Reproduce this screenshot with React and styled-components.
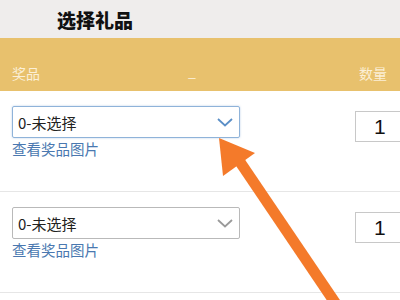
import React from "react";
import styled, { createGlobalStyle } from "styled-components";

const GlobalStyle = createGlobalStyle`
  html, body {
    margin: 0;
    padding: 0;
    background: #ffffff;
    font-family: "Noto Sans CJK SC", "Noto Sans", sans-serif;
  }
`;

const Page = styled.div`
  position: relative;
  width: 400px;
  height: 300px;
  overflow: hidden;
  background: #ffffff;
`;

const TopBar = styled.div`
  height: 38px;
  background: #efedec;
  display: flex;
  align-items: center;
  padding-left: 57px;
  box-sizing: border-box;
`;

const Title = styled.h1`
  margin: 0;
  font-size: 19px;
  font-weight: 900;
  color: #111111;
  line-height: 1;
`;

const HeaderBand = styled.div`
  height: 53px;
  background: #e8c16d;
  display: grid;
  grid-template-columns: 176px 1fr auto;
  align-items: end;
  padding: 0 13px 11px 12px;
  box-sizing: border-box;
  color: #fbefd6;
  font-size: 14px;
  line-height: 1;
`;

const Dash = styled.span`
  padding-bottom: 2px;
`;

const Row = styled.div`
  height: 101px;
  border-bottom: 1px solid #e6e6e6;
  display: flex;
  justify-content: space-between;
  align-items: flex-start;
  padding: 15px 0 0 12px;
  box-sizing: border-box;
`;

const PrizeCol = styled.div`
  display: flex;
  flex-direction: column;
  gap: 4px;
`;

const Select = styled.div`
  width: 228px;
  height: 32px;
  box-sizing: border-box;
  border: 1px solid ${(p) => (p.focused ? "#8fb3d9" : "#b9b9b9")};
  box-shadow: ${(p) => (p.focused ? "0 0 2px rgba(100,150,210,0.5)" : "none")};
  border-radius: 2px;
  display: flex;
  align-items: center;
  justify-content: space-between;
  padding: 0 6px 0 5px;
  font-size: 15px;
  color: #222222;
`;

const Link = styled.a`
  font-size: 14.5px;
  color: #4a78b0;
  text-decoration: none;
  line-height: 1;
`;

const Qty = styled.div`
  margin-top: 5px;
  width: 45px;
  height: 31px;
  box-sizing: border-box;
  border: 1px solid #c8c8c8;
  border-right: none;
  display: flex;
  align-items: center;
  padding-left: 18px;
  font-family: "Liberation Sans", "Noto Sans", sans-serif;
  font-size: 21px;
  color: #111111;
`;

const ArrowLayer = styled.svg`
  position: absolute;
  left: 0;
  top: 0;
  pointer-events: none;
`;

const Chevron = ({ color }) => (
  <svg width="16" height="9" viewBox="0 0 16 9">
    <path d="M1 1 L8 7.5 L15 1" fill="none" stroke={color} strokeWidth="1.8" />
  </svg>
);

const PrizeRow = ({ focused }) => (
  <Row>
    <PrizeCol>
      <Select focused={focused}>
        <span>0-未选择</span>
        <Chevron color={focused ? "#5b8fc7" : "#9a9a9a"} />
      </Select>
      <Link href="#">查看奖品图片</Link>
    </PrizeCol>
    <Qty>1</Qty>
  </Row>
);

export default function App() {
  return (
    <Page>
      <GlobalStyle />
      <TopBar>
        <Title>选择礼品</Title>
      </TopBar>
      <HeaderBand>
        <span>奖品</span>
        <Dash>_</Dash>
        <span>数量</span>
      </HeaderBand>
      <PrizeRow focused />
      <PrizeRow />
      <ArrowLayer width="400" height="300" viewBox="0 0 400 300">
        <line x1="240" y1="162" x2="336" y2="304" stroke="#f47a2a" strokeWidth="11" />
        <polygon points="219,138 255,153 223,176" fill="#f47a2a" />
      </ArrowLayer>
    </Page>
  );
}
